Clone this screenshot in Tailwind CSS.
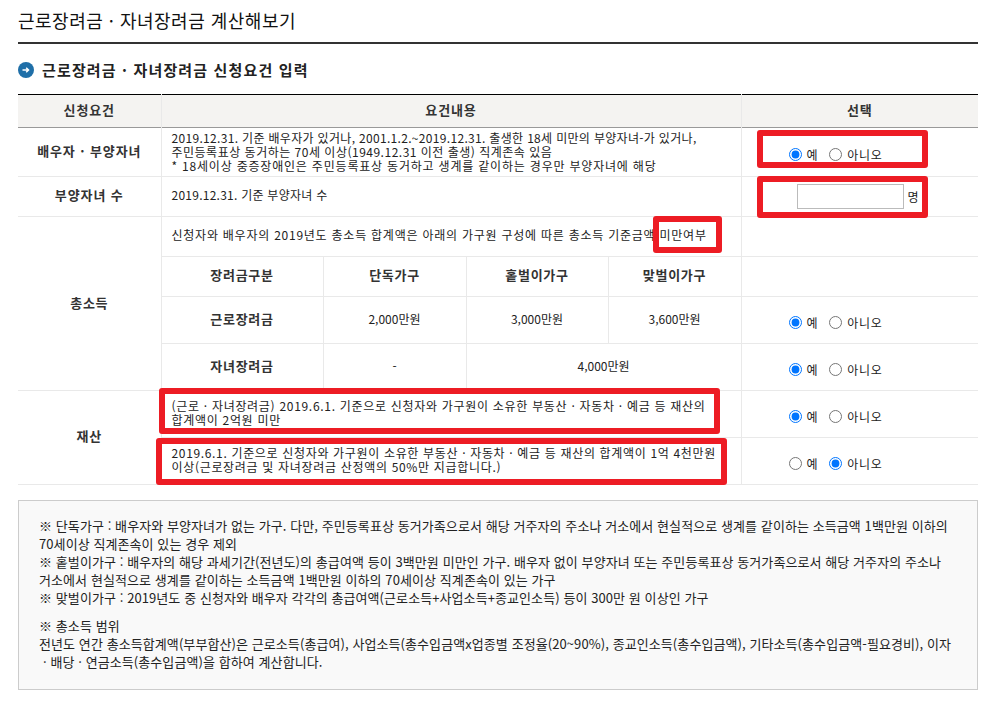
<!DOCTYPE html>
<html lang="ko">
<head>
<meta charset="UTF-8">
<title>근로장려금 · 자녀장려금 계산해보기</title>
<script src="https://cdn.jsdelivr.net/npm/@tailwindcss/browser@4"></script>
</head>
<body class="bg-white text-[#222] font-['Noto_Sans_CJK_KR','Liberation_Sans',sans-serif] text-[12px] leading-[14px]">
<div class="relative w-[993px] h-[708px] overflow-hidden pl-[18px] pr-[15px]">

  <h1 class="h-[44px] pt-[9px] border-b-2 border-[#333] text-[18px] leading-[22px] tracking-[0.5px] text-[#111] font-normal">근로장려금 · 자녀장려금 계산해보기</h1>

  <h2 class="flex items-center gap-[8px] h-[50px] pt-[1px] text-[15px] tracking-[1.15px] font-bold text-[#222]">
    <svg width="16" height="16" viewBox="0 0 16 16">
      <circle cx="8" cy="8" r="8" fill="#1f6fa8"/>
      <path d="M4.5 8h6M8.2 5.8 10.5 8 8.2 10.2" fill="none" stroke="#fff" stroke-width="1.5"/>
    </svg>
    근로장려금 · 자녀장려금 신청요건 입력
  </h2>

  <table class="w-[960px] table-fixed border-collapse border-t border-black">
    <colgroup>
      <col class="w-[143px]"><col class="w-[162px]"><col class="w-[143px]"><col class="w-[142px]"><col class="w-[133px]"><col class="w-[237px]">
    </colgroup>
    <thead>
      <tr class="h-[33px] bg-[#f4f3f1] border-b border-[#999] font-bold text-center text-[13px] tracking-[0.9px] text-[#333]">
        <th class="pb-[2px] border-r border-[#e9e9e9]">신청요건</th>
        <th colspan="4" class="pb-[2px] border-r border-[#e9e9e9]">요건내용</th>
        <th class="pb-[2px]">선택</th>
      </tr>
    </thead>
    <tbody>
      <tr class="h-[49px] border-b border-[#e9e9e9]">
        <th class="text-[13px] tracking-[0.9px] text-[#333] pb-[2px] border-r border-[#e9e9e9]">배우자 · 부양자녀</th>
        <td colspan="4" class="pl-[10px] border-r border-[#e9e9e9]">
          <div class="tracking-[0.32px] whitespace-nowrap">2019.12.31. 기준 배우자가 있거나, 2001.1.2.~2019.12.31. 출생한 18세 미만의 부양자녀-가 있거나,</div>
          <div class="tracking-[0.5px] whitespace-nowrap">주민등록표상 동거하는 70세 이상(1949.12.31 이전 출생) 직계존속 있음</div>
          <div class="tracking-[0.8px] whitespace-nowrap">* 18세이상 중증장애인은 주민등록표상 동거하고 생계를 같이하는 경우만 부양자녀에 해당</div>
        </td>
        <td class="pl-[47px] pt-[5px]">
          <div class="flex items-center tracking-[0.7px]"><input type="radio" name="a" checked class="mr-[5px]">예<input type="radio" name="a" class="ml-[11px] mr-[5px]">아니오</div>
        </td>
      </tr>
      <tr class="h-[40px] border-b border-[#e9e9e9]">
        <th class="text-[13px] tracking-[0.9px] text-[#333] pb-[3px] border-r border-[#e9e9e9]">부양자녀 수</th>
        <td colspan="4" class="pl-[10px] pb-[3px] tracking-[0.25px] border-r border-[#e9e9e9]">2019.12.31. 기준 부양자녀 수</td>
        <td class="pl-[55px]">
          <div class="flex items-center gap-[4px]"><input type="text" class="w-[107px] h-[25px] border border-[#bbb]">명</div>
        </td>
      </tr>
      <tr class="h-[40px] border-b border-[#e9e9e9]">
        <th rowspan="4" class="text-[13px] tracking-[0.7px] text-[#333] pb-[2px] border-r border-[#e9e9e9]">총소득</th>
        <td colspan="4" class="pl-[10px] pb-[3px] tracking-[0.76px] whitespace-nowrap border-r border-[#e9e9e9]">신청자와 배우자의 2019년도 총소득 합계액은 아래의 가구원 구성에 따른 총소득 기준금액 미만여부</td>
        <td></td>
      </tr>
      <tr class="h-[40px] border-b border-[#e9e9e9] text-center">
        <th class="text-[13px] tracking-[0.7px] text-[#333] pb-[3px] border-r border-[#e9e9e9]">장려금구분</th>
        <th class="text-[13px] tracking-[0.7px] text-[#333] pb-[3px] border-r border-[#e9e9e9]">단독가구</th>
        <th class="text-[13px] tracking-[0.7px] text-[#333] pb-[3px] border-r border-[#e9e9e9]">홑벌이가구</th>
        <th class="text-[13px] tracking-[0.7px] text-[#333] pb-[3px] border-r border-[#e9e9e9]">맞벌이가구</th>
        <td></td>
      </tr>
      <tr class="h-[47px] border-b border-[#e9e9e9] text-center">
        <th class="text-[13px] tracking-[0.7px] text-[#333] pb-[3px] border-r border-[#e9e9e9]">근로장려금</th>
        <td class="pb-[3px] border-r border-[#e9e9e9]">2,000만원</td>
        <td class="pb-[3px] border-r border-[#e9e9e9]">3,000만원</td>
        <td class="pb-[3px] border-r border-[#e9e9e9]">3,600만원</td>
        <td class="pl-[47px] pt-[5px] text-left">
          <div class="flex items-center tracking-[0.7px]"><input type="radio" name="b" checked class="mr-[5px]">예<input type="radio" name="b" class="ml-[11px] mr-[5px]">아니오</div>
        </td>
      </tr>
      <tr class="h-[47px] border-b border-[#e9e9e9] text-center">
        <th class="text-[13px] tracking-[0.7px] text-[#333] pb-[3px] border-r border-[#e9e9e9]">자녀장려금</th>
        <td class="pb-[3px] border-r border-[#e9e9e9]">-</td>
        <td colspan="2" class="pb-[3px] border-r border-[#e9e9e9]">4,000만원</td>
        <td class="pl-[47px] pt-[5px] text-left">
          <div class="flex items-center tracking-[0.7px]"><input type="radio" name="c" checked class="mr-[5px]">예<input type="radio" name="c" class="ml-[11px] mr-[5px]">아니오</div>
        </td>
      </tr>
      <tr class="h-[47px] border-b border-[#e9e9e9]">
        <th rowspan="2" class="text-[13px] tracking-[0.7px] text-[#333] pb-[4px] border-r border-[#e9e9e9]">재산</th>
        <td colspan="4" class="pl-[10px] pb-[2px] border-r border-[#e9e9e9]">
          <div class="tracking-[0.7px] whitespace-nowrap">(근로 · 자녀장려금) 2019.6.1. 기준으로 신청자와 가구원이 소유한 부동산 · 자동차 · 예금 등 재산의</div>
          <div class="tracking-[0.7px] whitespace-nowrap">합계액이 2억원 미만</div>
        </td>
        <td class="pl-[47px] pt-[5px]">
          <div class="flex items-center tracking-[0.7px]"><input type="radio" name="d" checked class="mr-[5px]">예<input type="radio" name="d" class="ml-[11px] mr-[5px]">아니오</div>
        </td>
      </tr>
      <tr class="h-[47px] border-b border-[#e9e9e9]">
        <td colspan="4" class="pl-[10px] pb-[2px] border-r border-[#e9e9e9]">
          <div class="tracking-[0.66px] whitespace-nowrap">2019.6.1. 기준으로 신청자와 가구원이 소유한 부동산 · 자동차 · 예금 등 재산의 합계액이 1억 4천만원</div>
          <div class="tracking-[0.68px] whitespace-nowrap">이상(근로장려금 및 자녀장려금 산정액의 50%만 지급합니다.)</div>
        </td>
        <td class="pl-[47px] pt-[5px]">
          <div class="flex items-center tracking-[0.7px]"><input type="radio" name="e" class="mr-[5px]">예<input type="radio" name="e" checked class="ml-[11px] mr-[5px]">아니오</div>
        </td>
      </tr>
    </tbody>
  </table>

  <div class="mt-[15px] h-[190px] border border-[#ccc] bg-[#f9f9f9] pt-[16px] pl-[20px] text-[13px] leading-[18px] tracking-[0.08px] whitespace-nowrap">
    <p>※ 단독가구 : 배우자와 부양자녀가 없는 가구. 다만, 주민등록표상 동거가족으로서 해당 거주자의 주소나 거소에서 현실적으로 생계를 같이하는 소득금액 1백만원 이하의<br>70세이상 직계존속이 있는 경우 제외<br>※ 홑벌이가구 : 배우자의 해당 과세기간(전년도)의 총급여액 등이 3백만원 미만인 가구. 배우자 없이 부양자녀 또는 주민등록표상 동거가족으로서 해당 거주자의 주소나<br>거소에서 현실적으로 생계를 같이하는 소득금액 1백만원 이하의 70세이상 직계존속이 있는 가구<br>※ 맞벌이가구 : 2019년도 중 신청자와 배우자 각각의 총급여액(근로소득+사업소득+종교인소득) 등이 300만 원 이상인 가구</p>
    <p class="mt-[10px]">※ 총소득 범위<br>전년도 연간 총소득합계액(부부합산)은 근로소득(총급여), 사업소득(총수입금액x업종별 조정율(20~90%), 종교인소득(총수입금액), 기타소득(총수입금액-필요경비), 이자<br><span class="pl-[4px]">· 배당 · 연금소득(총수입금액)을 합하여 계산합니다.</span></p>
  </div>

  <!-- red annotation boxes drawn over the screenshot -->
  <div class="absolute left-[757px] top-[130px] w-[171px] h-[38px] border-[6px] border-[#ed1c24] rounded-[3px]"></div>
  <div class="absolute left-[757px] top-[176px] w-[171px] h-[42px] border-[6px] border-[#ed1c24] rounded-[3px]"></div>
  <div class="absolute left-[653px] top-[216px] w-[69px] h-[37px] border-[6px] border-[#ed1c24] rounded-[3px]"></div>
  <div class="absolute left-[159px] top-[388px] w-[561px] h-[46px] border-[6px] border-[#ed1c24] rounded-[3px]"></div>
  <div class="absolute left-[156px] top-[438px] w-[571px] h-[47px] border-[6px] border-[#ed1c24] rounded-[3px]"></div>
</div>
</body>
</html>
